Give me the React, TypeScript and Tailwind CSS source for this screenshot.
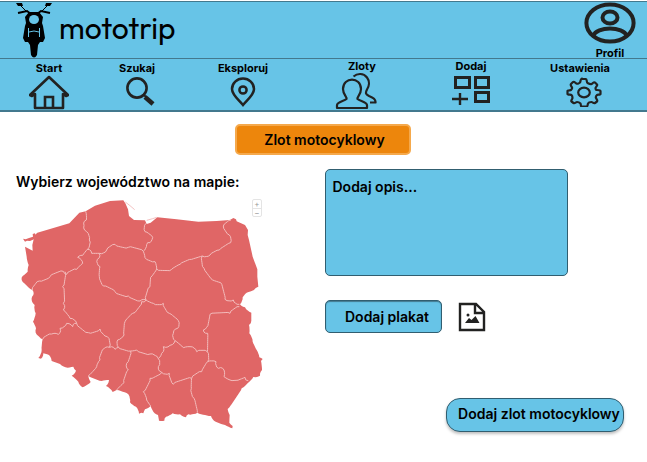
import React from "react";

type Point = [number, number];

const parse = (text: string): Point[] =>
  text.split(" ").map((pair) => pair.split(",").map(Number) as Point);

// Breaks straight segments into short uneven steps so borders look surveyed.
function ragged(text: string, amount: number): string {
  const points = parse(text);
  const out: Point[] = [points[0]];
  for (let i = 1; i < points.length; i++) {
    const [ax, ay] = points[i - 1];
    const [bx, by] = points[i];
    const length = Math.hypot(bx - ax, by - ay);
    const steps = Math.max(1, Math.round(length / 6));
    for (let s = 1; s < steps; s++) {
      const t = s / steps;
      const noise = Math.sin(ax * 12.9 + by * 78.2 + s * 37.7) * amount;
      out.push([
        ax + (bx - ax) * t - ((by - ay) / length) * noise,
        ay + (by - ay) * t + ((bx - ax) / length) * noise,
      ]);
    }
    out.push([bx, by]);
  }
  return out.map(([x, y]) => `${x.toFixed(1)},${y.toFixed(1)}`).join(" ");
}

const coast =
  "80,770 75,740 98,752 97,735 100,722 104,706 112,698 150,687 208,670 238,638 257,634 285,617 330,603 370,601 376,610 384,628 387,648 402,660 435,661 440,672 452,668 472,652 530,658 595,665 650,663 690,660 700,654 708,658 710,664 735,675 744,690 743,705 747,720 758,770 772,808 772,830 775,860";
const land =
  "775,860 762,870 740,878 728,892 720,913 735,922 754,938 754,962 747,975 748,1000 758,1025 770,1050 778,1072 788,1077 783,1083 786,1110 780,1127 760,1131 725,1165 683,1227 689,1245 688,1268 698,1278 697,1285 675,1275 642,1262 633,1248 592,1238 565,1243 558,1252 540,1243 518,1240 498,1250 493,1262 477,1262 474,1245 460,1235 452,1218 435,1228 430,1240 417,1241 408,1220 390,1207 385,1183 350,1170 338,1176 318,1158 327,1140 305,1143 265,1127 272,1146 248,1162 235,1145 215,1127 228,1112 220,1100 203,1103 180,1092 155,1083 147,1065 130,1060 123,1076 115,1074 125,1050 128,1018 107,998 108,985 99,965 107,940 104,915 95,900 100,885 97,870 65,840 68,828 83,815 86,795 80,770";

const borders = [
  "257,634 259,660 252,676 260,695 268,720 262,748",
  "262,748 248,766 233,772 248,790 230,808 200,823 190,814 150,830 118,843 97,870",
  "262,748 275,760 298,760 292,778 300,800 298,830 310,858 345,875 385,888 420,903 438,900",
  "298,760 320,750 345,733 385,742 430,754",
  "438,670 435,695 458,712 450,728 440,734 430,754",
  "430,754 435,773 465,785 470,807",
  "470,807 515,808 540,793 575,778 607,768",
  "607,768 630,765 658,750 692,728 688,705 670,678 693,660",
  "607,768 612,805 638,840 662,848 675,898 700,900 718,913",
  "470,807 452,832 450,860 438,900",
  "438,900 460,910 490,910 508,940 535,962 533,985 520,1000 525,1022",
  "438,900 425,905 398,940 375,965 372,1005 353,1020 355,1042",
  "195,815 188,860 190,910 190,930 210,955 230,970",
  "230,970 218,980 200,970 180,985 175,1003 155,1002 128,1018",
  "230,970 265,998 300,987 322,1010 328,1042",
  "328,1042 313,1045 300,1080 290,1100 265,1127",
  "328,1042 345,1048 355,1042 392,1053",
  "392,1053 380,1090 385,1110 372,1148 350,1170",
  "392,1053 410,1050 450,1062 475,1076",
  "525,1022 510,1036 490,1040 485,1060 475,1076",
  "475,1076 475,1100 485,1117",
  "485,1117 450,1135 430,1175 440,1200 452,1218",
  "485,1117 508,1120 520,1153 575,1135",
  "575,1135 574,1165 582,1195 592,1238",
  "575,1135 605,1115 623,1085",
  "718,920 690,940 630,943 625,970 610,990 623,1000 622,1055 623,1085",
  "525,1022 550,1043 570,1040 590,1055 622,1055",
  "623,1085 648,1085 655,1105 672,1110 672,1130 690,1140 720,1138 735,1132 745,1142",
];

function PolandMap() {
  return (
    <svg viewBox="60 597 732 693" className="block w-[244px]" role="img" aria-label="Mapa województw">
      <polygon fill="#e06666" points={`${coast} ${ragged(land, 2)}`} />
      <path fill="#e06666" d="M69 716l8 2 10-4 12-4-1-8 7-2 2 8-5 10-12 5-9-1-6 3z" />
      <path d="M376 606l14 11 14 12M440 661l18-5 12-4" stroke="#eda3a3" strokeWidth="2" fill="none" />
      {borders.map((line) => (
        <polyline
          key={line}
          points={ragged(line, 4)}
          fill="none"
          stroke="#f3bcbc"
          strokeWidth="3"
          strokeLinejoin="round"
        />
      ))}
    </svg>
  );
}

function Motorcycle() {
  return (
    <svg viewBox="0 0 36 56" className="h-14 w-9">
      <path d="M0 1h6l1 3H2zM36 1h-6l-1 3h5z" />
      <path d="M5 4l6 6M31 4l-6 6" fill="none" stroke="#000" />
      <path d="M2 11l9-2 4 3M34 11l-9-2-4 3" fill="none" stroke="#000" strokeWidth="2" />
      <path d="M13 10h10l4 5-1 6 1 3 2 12-2 4h-3l-2 3-1 10q-3 5-6 0l-1-10-2-3H9l-2-4 2-12 1-3-1-6z" />
      <ellipse cx="18" cy="17.500" rx="5" ry="4.500" fill="#67c4e7" />
      <path d="M12.500 26v9M23.500 26v9M13 30q5-2 10 0" fill="none" stroke="#67c4e7" />
    </svg>
  );
}

const ink = "#222221";

function ProfileIcon() {
  return (
    <svg viewBox="0 0 52 42" className="h-[42px] w-[52px]" fill="none" stroke={ink} strokeWidth="4">
      <ellipse cx="26" cy="21" rx="23.6" ry="18.600" />
      <ellipse cx="26" cy="15.500" rx="7.500" ry="6" />
      <path d="M9 34C13 24 39 24 43 34" />
    </svg>
  );
}

function HomeIcon() {
  return (
    <svg viewBox="0 0 40 36" className="h-9 w-10" fill="none" stroke={ink} strokeWidth="2.6">
      <path d="M1 21L20 3l19 18-2 1-3-2v14H6V20l-3 2z" strokeLinejoin="round" />
      <path d="M16 34V23h8v11" />
    </svg>
  );
}

function SearchIcon() {
  return (
    <svg viewBox="0 0 30 30" className="h-[30px] w-[30px]" fill="none" stroke={ink}>
      <circle cx="11" cy="11" r="9.6" strokeWidth="2.6" />
      <path d="M17 17l3 3" strokeWidth="2" />
      <path d="M19 20l8 7" strokeWidth="4.5" />
    </svg>
  );
}

function PinIcon() {
  return (
    <svg viewBox="0 0 26 30" className="h-[30px] w-[26px]" fill="none" stroke={ink} strokeWidth="2.5">
      <path d="M13 28C9 23 2 18 2 12a11 10.5 0 0122 0c0 6-7 11-11 16z" />
      <circle cx="13" cy="13" r="3.6" />
    </svg>
  );
}

function PeopleIcon() {
  return (
    <svg viewBox="0 0 42 38" className="h-[38px] w-[42px]" fill="none" stroke={ink} strokeWidth="2.2" strokeLinejoin="round">
      <path d="M2 36v-3c0-3 7-4 9.500-6 1-2-3.500-4-3.500-10 0-12.500 18-12.500 18 0 0 6-4.500 8-3.500 10 2.500 2 9.500 3 9.500 6v3z" />
      <path d="M18.500 4.500c4-3.500 10-3.500 13.500 1 3 4 2 9 0 12-2 4-1 5 2 6.500 4 1.500 7 3 6.500 6.500H35" />
    </svg>
  );
}

function AddGridIcon() {
  return (
    <svg viewBox="0 0 40 30" className="h-[30px] w-10" fill="none" stroke={ink} strokeWidth="3">
      <path d="M4.500 2.500h14v10h-14zM24.500 2.500h13v10h-13zM24.500 17.500h13v9h-13z" />
      <path d="M1 24h16M9 18v12" strokeWidth="2.4" />
    </svg>
  );
}

function GearIcon() {
  return (
    <svg viewBox="0 0 36 30" className="h-[30px] w-9" fill="none" stroke={ink} strokeWidth="2.2" strokeLinejoin="round">
      <path d="M16 2h4c1 0 .5 3.500 1.500 4s3 1.500 4 1 2.500-2.500 3.500-1.500l2 2c1 1-1.500 2.500-1.500 3.500s.5 2 1.500 2 3.500 0 3.500 1v3c0 1-3 .5-3.500 1s-1.500 2-1 3 2 2.500 1 3.500l-2 1.500c-1 1-2.500-1-3.500-1s-3 .5-3.500 1.500 0 3-1.500 3h-5c-1 0-.5-2.500-1-3s-2.500-1.500-3.500-1.500-2.500 2-3.500 1l-2-1.500c-1-1 1-2.500 1-3.500s-.5-2.500-1-3-4 0-4-1v-3c0-1 3-.5 3.500-1s1.500-1.500 1-2.500-2-2.500-1-3.500l2-2c1-1 2.500 1 3.500 1.500s3-.5 3.500-1 .5-4 2-4z" />
      <ellipse cx="18" cy="15.500" rx="5.800" ry="4.800" />
    </svg>
  );
}

function ImageFileIcon() {
  return (
    <svg viewBox="0 0 28 30" className="h-[30px] w-7" fill="none" stroke={ink} strokeWidth="2.4">
      <path d="M2 2h16l8 8v18H2zM17 2v9h9" />
      <circle cx="10" cy="13" r="1.500" fill={ink} stroke="none" />
      <path d="M7 21l4-5 2.500 2 4-4 4 7z" fill={ink} stroke="none" />
    </svg>
  );
}

const links = [
  { label: "Start", icon: <HomeIcon />, pad: "pt-[3px]" },
  { label: "Szukaj", icon: <SearchIcon />, pad: "pt-[3px]", gap: "pt-[3px] pl-2" },
  { label: "Eksploruj", icon: <PinIcon />, pad: "pt-[3px]", gap: "pt-[3px]" },
  { label: "Zloty", icon: <PeopleIcon />, pad: "pt-px", gap: "pr-3" },
  { label: "Dodaj", icon: <AddGridIcon />, pad: "pt-px", gap: "pt-[3px]" },
  { label: "Ustawienia", icon: <GearIcon />, pad: "pt-[3px]", gap: "pt-[3px] pl-2" },
];

export default function App() {
  return (
    <div className="min-h-screen bg-white pt-px font-['Inter','Liberation_Sans',sans-serif] text-sm font-semibold text-black">
      <header className="bg-[#67c4e7]">
        <div className="flex h-[58px] items-start justify-between border-y border-[#43798e] pr-[11px] pl-4">
          <a href="#start" className="flex items-center gap-[7px]">
            <Motorcycle />
            <span className="pb-1 font-['Outfit','Lato',sans-serif] text-[30px] leading-9 font-normal">mototrip</span>
          </a>
          <a href="#profil" className="flex flex-col items-center text-[11px] leading-3">
            <ProfileIcon />
            <span className="pt-[3px] font-bold">Profil</span>
          </a>
        </div>
        <nav className="grid h-[53px] grid-cols-[98fr_78fr_134fr_104fr_114fr_104fr_15fr] border-b-2 border-[#43798e]">
          {links.map(({ label, icon, pad, gap }) => (
            <a key={label} href={`#${label.toLowerCase()}`} className={`flex flex-col items-center text-[11px] leading-3 font-bold ${pad}`}>
              <span>{label}</span>
              <span className={gap}>{icon}</span>
            </a>
          ))}
        </nav>
      </header>

      <main className="pt-3">
        <div className="flex justify-center pr-0.5">
          <button className="h-[31px] w-44 rounded-[5px] border-2 border-[#f5a94c] bg-[#ed860c] pl-1">Zlot motocyklowy</button>
        </div>
        <div className="grid grid-cols-2 pt-[14px]">
          <section className="pt-[3px] pl-4">
            <h2 className="leading-5">Wybierz województwo na mapie:</h2>
            <div className="flex items-start pt-[7px] pl-1">
              <PolandMap />
              <div className="-ml-3 flex flex-col rounded-xs border border-[#e4e4e4] bg-white text-[8px] leading-2 font-normal text-[#999]">
                <button className="h-2 w-2" aria-label="Przybliż">+</button>
                <button className="h-2 w-2 border-t border-[#e4e4e4]" aria-label="Oddal">−</button>
              </div>
            </div>
          </section>
          <section className="flex flex-col items-start pr-[23px] pl-px">
            <textarea
              aria-label="Dodaj opis"
              placeholder="Dodaj opis..."
              className="block h-[107px] w-[243px] resize-none rounded-[5px] border border-[#315e70] bg-[#67c4e7] px-[7px] py-[7px] leading-5 placeholder:text-black placeholder:opacity-100"
            />
            <div className="flex items-center gap-4 pt-6">
              <button className="h-[33px] w-[117px] rounded-[5px] border border-[#315e70] bg-[#67c4e7] pl-2 shadow-[inset_0_1px_1px_#43798e]">
                Dodaj plakat
              </button>
              <ImageFileIcon />
            </div>
            <div className="flex w-full justify-end pt-[65px]">
              <button className="h-[34px] w-[178px] rounded-[14px] border border-[#315e70] bg-[#67c4e7] pb-0.5 pl-2 whitespace-nowrap shadow-[0_2px_3px_#00000040]">
                Dodaj zlot motocyklowy
              </button>
            </div>
          </section>
        </div>
      </main>
    </div>
  );
}
